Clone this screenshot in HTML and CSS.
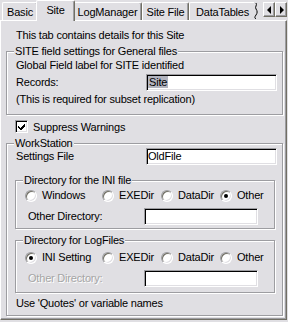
FILE: index.html
```html
<!DOCTYPE html>
<html>
<head>
<meta charset="utf-8">
<link rel="stylesheet" href="styles.css">
</head>
<body>
<div class="tabs">
  <div class="tab t-basic">Basic</div>
  <div class="tab sel t-site">Site</div>
  <div class="tab t-log">LogManager</div>
  <div class="tab t-sf">Site File</div>
  <div class="tab t-data">DataTables</div>
  <svg class="torn" width="4" height="18" viewBox="0 0 4 18"><path d="M2 2 C3.5 4 0.5 6 2 8 S3.5 12 2 14 S0.5 17 2 18" fill="none" stroke="#000" stroke-width="1"/></svg>
  <div class="spin">
    <div class="sbtn"><span class="arr-l"></span></div>
    <div class="sbtn"><span class="arr-r"></span></div>
  </div>
</div>
<div class="panel">
  <div class="line intro">This tab contains details for this Site</div>
  <fieldset class="grp g-site">
    <legend>SITE field settings for General files</legend>
    <div class="line">Global Field label for SITE identified</div>
    <div class="row r-rec">
      <span class="lbl">Records:</span>
      <div class="edit e-wide"><span class="hl">Site</span></div>
    </div>
    <div class="line r-note">(This is required for subset replication)</div>
  </fieldset>
  <div class="chk">
    <span class="box"><svg width="7" height="7" viewBox="0 0 7 7" shape-rendering="crispEdges"><path d="M0 2 L0 5 L2 7 L3 7 L7 3 L7 0 L2 5 Z" fill="#000"/></svg></span>
    <span>Suppress Warnings</span>
  </div>
  <fieldset class="grp g-ws">
    <legend>WorkStation</legend>
    <div class="row r-set">
      <span class="lbl">Settings File</span>
      <div class="edit e-wide">OldFile</div>
    </div>
    <fieldset class="grp inner g-ini">
      <legend>Directory for the INI file</legend>
      <div class="radios">
        <span class="opt"><span class="radio"></span>Windows</span>
        <span class="opt"><span class="radio"></span>EXEDir</span>
        <span class="opt"><span class="radio"></span>DataDir</span>
        <span class="opt"><span class="radio on"></span>Other</span>
      </div>
      <div class="row r-od">
        <span class="lbl sub">Other Directory:</span>
        <div class="edit e-sub"></div>
      </div>
    </fieldset>
    <fieldset class="grp inner g-log">
      <legend>Directory for LogFiles</legend>
      <div class="radios">
        <span class="opt"><span class="radio on"></span>INI Setting</span>
        <span class="opt"><span class="radio"></span>EXEDir</span>
        <span class="opt"><span class="radio"></span>DataDir</span>
        <span class="opt"><span class="radio"></span>Other</span>
      </div>
      <div class="row r-od">
        <span class="lbl sub dis">Other Directory:</span>
        <div class="edit e-sub"></div>
      </div>
    </fieldset>
    <div class="line r-use">Use 'Quotes' or variable names</div>
  </fieldset>
</div>
</body>
</html>
```
FILE: styles.css
```css
* { box-sizing: border-box; }
html, body { margin: 0; padding: 0; }
body {
  width: 288px;
  height: 322px;
  overflow: hidden;
  background: #e0dfe3;
  font-family: "Liberation Sans", Arial, sans-serif;
  font-size: 11px;
  letter-spacing: -0.2px;
  color: #000;
}
.line { height: 13px; line-height: 13px; white-space: nowrap; }

/* tabs */
.tabs {
  display: flex;
  align-items: flex-end;
  height: 20px;
  padding: 0 1px 0 2px;
}
.tab {
  height: 18px;
  padding-top: 3px;
  line-height: 13px;
  text-align: center;
  white-space: nowrap;
  background: #e0dfe3;
  border-top: 1px solid #fff;
  border-left: 1px solid #fff;
  border-right: 1px solid #716f64;
  box-shadow: inset -1px 0 0 #9d9da1;
  border-radius: 2px 2px 0 0;
  flex: none;
}
.tab.sel {
  height: 21px;
  margin: 0 -2px -1px;
  position: relative;
  z-index: 2;
}
.t-basic { width: 36px; }
.t-site { width: 39px; }
.t-log { width: 69px; }
.t-sf { width: 47px; }
.t-data {
  width: 65px;
  text-align: left;
  padding-left: 6px;
  border-right: 0;
  box-shadow: none;
  border-radius: 2px 0 0 0;
  overflow: hidden;
}
.torn { flex: none; align-self: flex-end; margin-bottom: 1px; }
.spin {
  margin-left: auto;
  align-self: flex-start;
  margin-top: 2px;
  display: flex;
}
.sbtn {
  width: 12px;
  height: 15px;
  display: flex;
  align-items: center;
  justify-content: center;
  background: #e0dfe3;
  border: 1px solid;
  border-color: #fff #716f64 #716f64 #fff;
  box-shadow: inset -1px -1px 0 #9d9da1;
}
.arr-l, .arr-r { width: 0; height: 0; border-top: 4px solid transparent; border-bottom: 4px solid transparent; }
.arr-l { border-right: 4px solid #000; margin-right: 1px; }
.arr-r { border-left: 4px solid #000; margin-left: 1px; }

/* panel */
.panel {
  width: 287px;
  height: 300px;
  border-top: 1px solid #fff;
  border-left: 1px solid #fff;
  border-right: 1px solid #716f64;
  border-bottom: 1px solid #716f64;
  box-shadow: inset -1px -1px 0 #9d9da1;
  padding: 8px 0 0 5px;
}
.intro { margin-left: 10px; }

.grp {
  margin: 0;
  min-width: 0;
  width: 277px;
  padding: 2px 4px 8px 9px;
  border: 1px solid #9d9da1;
  box-shadow: inset 1px 1px 0 #fff, 1px 1px 0 #fff;
}
.grp legend {
  padding: 0 1px;
  margin-left: -2px;
  height: 11px;
  line-height: 11px;
  background: #e0dfe3;
  white-space: nowrap;
}
.g-site { margin-top: 4px; }
.row { display: flex; align-items: center; height: 17px; }
.lbl { flex: none; width: 130px; white-space: nowrap; line-height: 13px; }
.r-rec { margin-top: 2px; }
.r-note { margin-top: 2px; }

.edit {
  height: 17px;
  background: #fff;
  border: 1px solid;
  border-color: #9d9da1 #fff #fff #9d9da1;
  box-shadow: inset 1px 1px 0 #000, inset -1px -1px 0 #e0dfe3;
  padding: 1px 0 0 1px;
  line-height: 13px;
  white-space: nowrap;
  flex: none;
}
.e-wide { width: 131px; }
.e-sub { width: 114px; }
.hl { background: #b2b4bf; padding: 0 1px; }

.chk { display: flex; align-items: center; height: 13px; margin: 5px 0 0 9px; }
.box {
  width: 13px;
  height: 13px;
  margin-right: 5px;
  background: #fff;
  border: 1px solid;
  border-color: #9d9da1 #fff #fff #9d9da1;
  box-shadow: inset 1px 1px 0 #000, inset -1px -1px 0 #e0dfe3;
  display: flex;
  align-items: center;
  justify-content: center;
}

.g-ws { margin-top: 5px; padding-top: 0; padding-bottom: 5px; }
.r-set { margin-top: -1px; }

.inner { width: 260px; margin-left: -1px; padding: 3px 4px 3px 9px; }
.g-ini { margin-top: 10px; }
.g-log { margin-top: 6px; padding-top: 5px; padding-bottom: 5px; }
.radios {
  display: grid;
  grid-template-columns: 77px 59px 59px auto;
  height: 13px;
  align-items: center;
}
.opt { display: flex; align-items: center; white-space: nowrap; line-height: 13px; }
.radio {
  width: 12px;
  height: 12px;
  margin-right: 5px;
  border-radius: 50%;
  background: #fff;
  border: 1px solid;
  border-color: #9d9da1 #fff #fff #9d9da1;
  box-shadow: inset 1px 1px 0 #716f64, inset -1px -1px 0 #e0dfe3;
  display: flex;
  align-items: center;
  justify-content: center;
  flex: none;
}
.radio.on::after {
  content: "";
  width: 4px;
  height: 4px;
  border-radius: 50%;
  background: #000;
}
.r-od { margin-top: 6px; }
.sub { width: 116px; margin-left: 3px; }
.dis { color: #a5a5a5; text-shadow: 1px 1px 0 #fff; }
.r-use { margin-top: 4px; }
```
